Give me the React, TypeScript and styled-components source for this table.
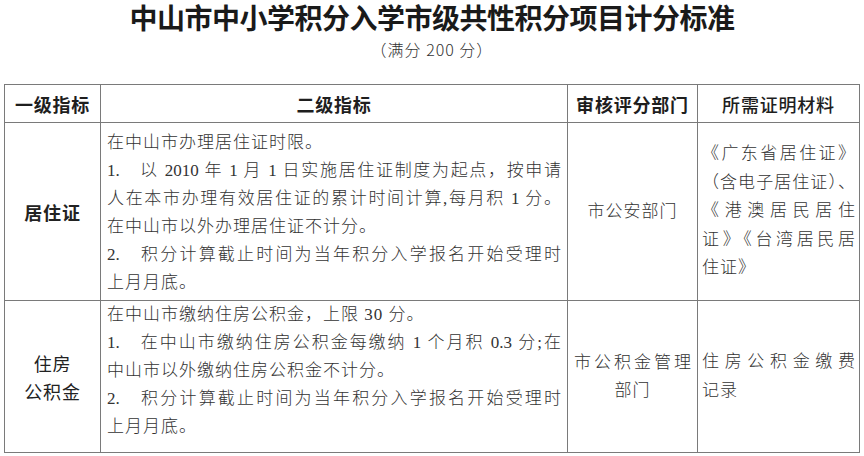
import React from 'react'
import styled, { createGlobalStyle } from 'styled-components'

const GlobalStyle = createGlobalStyle`
  html, body {
    margin: 0;
    padding: 0;
    background: #fff;
  }
  body {
    font-family: "Noto Sans CJK SC", sans-serif;
    color: #2a2a2a;
  }
`

const Page = styled.div`
  width: 864px;
  height: 456px;
  overflow: hidden;
  box-sizing: border-box;
`

const Title = styled.h1`
  margin: 0;
  text-align: center;
  font-size: 28px;
  line-height: 34px;
  font-weight: 700;
  letter-spacing: -0.5px;
  color: #1a1a1a;
`

const Subtitle = styled.div`
  margin-top: 4px;
  text-align: center;
  font-size: 16px;
  line-height: 22px;
  font-weight: 300;
  letter-spacing: 1px;
  color: #333;
`

const Table = styled.table`
  margin: 24px 0 0 4px;
  width: 855px;
  border-collapse: collapse;
  table-layout: fixed;
`

const HeadRow = styled.tr`
  height: 38px;
`

const BodyRow = styled.tr<{ $h: number }>`
  height: ${(p) => p.$h}px;
`

const Th = styled.th<{ $bold?: boolean }>`
  border: 1px solid #7a7a7a;
  padding: 0;
  text-align: center;
  vertical-align: middle;
  font-size: 18px;
  font-weight: ${(p) => (p.$bold ? 700 : 500)};
  letter-spacing: 0.8px;
  color: #1e1e1e;
`

const LabelCell = styled.td<{ $bold?: boolean }>`
  border: 1px solid #7a7a7a;
  text-align: center;
  vertical-align: middle;
  font-size: 18px;
  line-height: 28px;
  font-weight: ${(p) => (p.$bold ? 700 : 400)};
  letter-spacing: 0.8px;
  color: #222;
`

const TextCell = styled.td<{ $top?: number; $align?: 'top' | 'middle' }>`
  border: 1px solid #7a7a7a;
  padding: ${(p) => p.$top ?? 0}px 6px 0 6px;
  vertical-align: ${(p) => p.$align ?? 'middle'};
  font-family: "Liberation Serif", "Noto Sans CJK SC", serif;
  font-size: 17px;
  line-height: 28px;
  font-weight: 300;
  color: #333;
`

const NarrowCell = styled(TextCell)`
  padding: 0 4px;
  line-height: 28.5px;
`

const Line = styled.div<{ $full?: boolean; $center?: boolean }>`
  letter-spacing: ${(p) => (p.$full ? 0 : 1)}px;
  text-align: ${(p) => (p.$center ? 'center' : 'justify')};
  text-align-last: ${(p) =>
    p.$center ? 'center' : p.$full ? 'justify' : 'left'};
`

const Lines = ({ lines, last = 'left' }: { lines: string[]; last?: 'left' | 'center' }) => (
  <>
    {lines.map((t, i) =>
      i === lines.length - 1 ? (
        <Line key={i} $center={last === 'center'}>
          {t}
        </Line>
      ) : (
        <Line key={i} $full>
          {t}
        </Line>
      )
    )}
  </>
)

export default function App() {
  return (
    <>
      <GlobalStyle />
      <Page>
        <Title>中山市中小学积分入学市级共性积分项目计分标准</Title>
        <Subtitle>（满分 200 分）</Subtitle>
        <Table>
          <colgroup>
            <col style={{ width: 96 }} />
            <col style={{ width: 467 }} />
            <col style={{ width: 130 }} />
            <col style={{ width: 162 }} />
          </colgroup>
          <thead>
            <HeadRow>
              <Th $bold>一级指标</Th>
              <Th $bold>二级指标</Th>
              <Th $bold>审核评分部门</Th>
              <Th>所需证明材料</Th>
            </HeadRow>
          </thead>
          <tbody>
            <BodyRow $h={178}>
              <LabelCell $bold>居住证</LabelCell>
              <TextCell $top={6} $align="top">
                <Line>在中山市办理居住证时限。</Line>
                <Line $full>1.　以 2010 年 1 月 1 日实施居住证制度为起点，按申请</Line>
                <Line $full>人在本市办理有效居住证的累计时间计算,每月积 1 分。</Line>
                <Line>在中山市以外办理居住证不计分。</Line>
                <Line $full>2.　积分计算截止时间为当年积分入学报名开始受理时</Line>
                <Line>上月月底。</Line>
              </TextCell>
              <TextCell>
                <Line $center>市公安部门</Line>
              </TextCell>
              <NarrowCell>
                <Lines
                  lines={[
                    '《广东省居住证》',
                    '（含电子居住证）、',
                    '《港澳居民居住',
                    '证》《台湾居民居',
                    '住证》',
                  ]}
                />
              </NarrowCell>
            </BodyRow>
            <BodyRow $h={152}>
              <LabelCell>
                住房
                <br />
                公积金
              </LabelCell>
              <TextCell $align="top">
                <Line>在中山市缴纳住房公积金，上限 30 分。</Line>
                <Line $full>1.　在中山市缴纳住房公积金每缴纳 1 个月积 0.3 分;在</Line>
                <Line>中山市以外缴纳住房公积金不计分。</Line>
                <Line $full>2.　积分计算截止时间为当年积分入学报名开始受理时</Line>
                <Line>上月月底。</Line>
              </TextCell>
              <TextCell>
                <Lines lines={['市公积金管理', '部门']} last="center" />
              </TextCell>
              <NarrowCell>
                <Lines lines={['住房公积金缴费', '记录']} />
              </NarrowCell>
            </BodyRow>
          </tbody>
        </Table>
      </Page>
    </>
  )
}
